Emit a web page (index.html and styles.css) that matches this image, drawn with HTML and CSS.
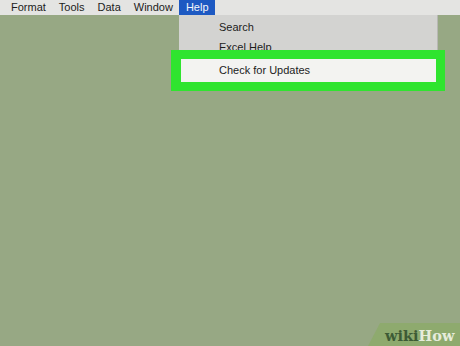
FILE: index.html
```
<!DOCTYPE html>
<html>
<head>
<meta charset="utf-8">
<link rel="stylesheet" href="styles.css">
</head>
<body>
<div class="screen">
  <div class="menubar">
    <span class="mitem">Format</span>
    <span class="mitem">Tools</span>
    <span class="mitem">Data</span>
    <span class="mitem">Window</span>
    <span class="mitem active">Help</span>
  </div>
  <div class="dropdown">
    <div class="ditem">Search</div>
    <div class="ditem">Excel Help</div>
  </div>
  <div class="highlight">
    <div class="hinner">Check for Updates</div>
  </div>
  <div class="watermark"><span class="wiki">wiki</span><span class="how">How</span></div>
</div>
</body>
</html>
```
FILE: styles.css
```
html, body {
  margin: 0;
  padding: 0;
}
body {
  width: 460px;
  height: 346px;
  overflow: hidden;
  font-family: "Liberation Sans", Arial, sans-serif;
}
.screen {
  position: relative;
  width: 460px;
  height: 346px;
  background: #97a884;
}
.menubar {
  display: flex;
  height: 15px;
  padding-left: 4.5px;
  background: #e4e4e2;
  font-size: 11px;
  line-height: 15px;
  color: #1c1c1c;
}
.mitem {
  padding: 0 6.5px;
}
.mitem.active {
  background: #1d59c2;
  color: #f4f6fb;
  height: 16px;
}
.dropdown {
  position: absolute;
  left: 179px;
  top: 15px;
  width: 258px;
  height: 42px;
  background: #d3d3d1;
  border-right: 1px solid #b8b8b4;
  font-size: 11px;
  color: #1c1c1c;
}
.ditem {
  padding-left: 40px;
  height: 20px;
  line-height: 20px;
}
.ditem:first-child {
  margin-top: 2px;
}
.highlight {
  position: absolute;
  left: 171px;
  top: 50px;
  width: 255px;
  padding: 9px 9px 9px 10px;
  background: #2fe42f;
}
.hinner {
  height: 23px;
  line-height: 23px;
  padding-left: 38px;
  background: #f3f3f1;
  font-size: 11px;
  color: #1c1c1c;
}
.watermark {
  position: absolute;
  right: 0;
  bottom: 0;
  width: 92px;
  height: 23px;
  background: #8eaa6e;
  clip-path: polygon(12px 0, 100% 0, 100% 100%, 0 100%);
  font-family: "DejaVu Serif", "Liberation Serif", serif;
  font-weight: bold;
  font-size: 14.5px;
  line-height: 25px;
  box-sizing: border-box;
  padding-left: 17px;
  white-space: nowrap;
}
.wiki {
  color: #3d5b35;
}
.how {
  color: #e6ecdc;
}
```
